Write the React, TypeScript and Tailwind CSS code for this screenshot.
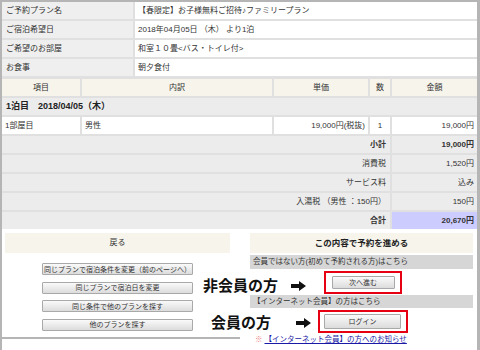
import React from "react";

const font = "font-['Liberation_Sans','Noto_Sans_CJK_JP',sans-serif]";

const Arrow = () => (
  <svg width="15" height="10" viewBox="0 0 15 10" className="shrink-0">
    <path d="M0 3H8V0L15 5L8 10V7H0Z" fill="#111" />
  </svg>
);

const InfoRow = ({ label, value }: { label: string; value: string }) => (
  <>
    <div className="h-[17px] bg-[#efefef] pl-[4px] flex items-center">{label}</div>
    <div className="h-[17px] bg-white pl-[3px] flex items-center">{value}</div>
  </>
);

const SumRow = ({
  label,
  value,
  bold = false,
  total = false,
}: {
  label: string;
  value: string;
  bold?: boolean;
  total?: boolean;
}) => (
  <>
    <div
      className={`col-span-4 h-[17px] bg-[#ececec] pr-[4px] flex items-center justify-end ${
        bold ? "font-bold" : ""
      }`}
    >
      {label}
    </div>
    <div
      className={`h-[17px] pr-[3px] flex items-center justify-end ${
        total ? "bg-[#ccccff]" : "bg-[#ececec]"
      } ${bold ? "font-bold" : ""}`}
    >
      {value}
    </div>
  </>
);

const BackButton = ({ children }: { children: React.ReactNode }) => (
  <div className="w-[151px] h-[12px] border border-[#a9a9a9] rounded-[1px] bg-gradient-to-b from-[#fafafa] to-[#dcdcdc] flex items-center justify-center text-[7px] text-[#333]">
    {children}
  </div>
);

export default function App() {
  return (
    <div
      className={`${font} relative w-[480px] h-[350px] bg-white border-l-2 border-r-[3px] border-t-2 border-[#b5b5b5] text-[8px] text-[#333] leading-none overflow-hidden`}
    >
      {/* 予約内容 + 料金明細 */}
      <div className="flex flex-col gap-[3px] bg-[#e0e0e0]">
        <div className="grid grid-cols-[131px_1fr] gap-[2px]">
          <InfoRow label="ご予約プラン名" value="【春限定】お子様無料ご招待♪ファミリープラン" />
          <InfoRow label="ご宿泊希望日" value="2018年04月05日 （木） より1泊" />
          <InfoRow label="ご希望のお部屋" value="和室１０畳<バス・トイレ付>" />
          <InfoRow label="お食事" value="朝夕食付" />
        </div>

        <div className="grid grid-cols-[78px_190px_94px_20px_1fr] gap-[2px]">
          {["項目", "内訳", "単価", "数", "金額"].map((h) => (
            <div key={h} className="h-[17px] bg-[#f6f4eb] flex items-center justify-center">
              {h}
            </div>
          ))}

          <div className="col-span-5 h-[17px] bg-[#ececec] pl-[4px] flex items-center font-bold text-[9px] text-[#222]">
            1泊目　2018/04/05（木）
          </div>

          <div className="h-[17px] bg-white pl-[3px] flex items-center">1部屋目</div>
          <div className="h-[17px] bg-white pl-[3px] flex items-center">男性</div>
          <div className="h-[17px] bg-white pr-[3px] flex items-center justify-end">19,000円(税抜)</div>
          <div className="h-[17px] bg-white flex items-center justify-center">1</div>
          <div className="h-[17px] bg-white pr-[3px] flex items-center justify-end">19,000円</div>

          <SumRow label="小計" value="19,000円" bold />
          <SumRow label="消費税" value="1,520円" />
          <SumRow label="サービス料" value="込み" />
          <SumRow label="入湯税 （男性 ：150円）" value="150円" />
          <SumRow label="合計" value="20,670円" bold total />
        </div>
      </div>

      {/* ボタン類 */}
      <div className="flex mt-[2px]">
        <div className="w-[238px] h-[108px] border-b-2 border-[#b5b5b5] pl-[3px] pt-[2px]">
          <div className="w-[225px] flex flex-col items-center">
            <div className="w-full h-[20px] bg-[#f6f4eb] flex items-center justify-center">戻る</div>
            <div className="flex flex-col gap-[6.5px] mt-[10px]">
              <BackButton>同じプランで宿泊条件を変更（前のページへ）</BackButton>
              <BackButton>同じプランで宿泊日を変更</BackButton>
              <BackButton>同じ条件で他のプランを探す</BackButton>
              <BackButton>他のプランを探す</BackButton>
            </div>
          </div>
        </div>

        <div className="w-[223px] ml-[10px] pt-[2px] flex flex-col">
          <div className="h-[20px] bg-[#f6f4eb] flex items-center justify-center font-bold text-[8.5px] text-[#222]">
            この内容で予約を進める
          </div>
          <div className="h-[14px] mt-[2px] bg-[#d6d6d6] pl-[3px] flex items-center text-[7.5px]">
            会員ではない方(初めて予約される方)はこちら
          </div>
          <div className="h-[26px] flex items-center justify-center pl-[3px]">
            <div className="w-[78px] h-[23px] border-2 border-[#e60012] flex items-center justify-center">
              <div className="w-[63px] h-[13px] border border-[#a9a9a9] rounded-[1px] bg-gradient-to-b from-[#fafafa] to-[#dcdcdc] flex items-center justify-center text-[7px]">
                次へ進む
              </div>
            </div>
          </div>
          <div className="h-[13px] bg-[#d6d6d6] pl-[3px] flex items-center text-[7.5px]">
            【インターネット会員】の方はこちら
          </div>
          <div className="h-[27px] flex items-center justify-center pl-[2px]">
            <div className="w-[90px] h-[23px] border-2 border-[#e60012] flex items-center justify-center">
              <div className="w-[77px] h-[15px] border border-[#a9a9a9] rounded-[1px] bg-gradient-to-b from-[#fafafa] to-[#dcdcdc] flex items-center justify-center text-[7px]">
                ログイン
              </div>
            </div>
          </div>
          <div className="flex items-center pl-[5px] text-[7.5px] mt-[1px]">
            <span className="text-[#f08080] mr-[2px]">※</span>
            <span className="text-[#1a1aa6] underline">【インターネット会員】の方へのお知らせ</span>
          </div>
        </div>
      </div>

      {/* 注釈 */}
      <div className="absolute left-[201px] top-[276px] flex items-center gap-[13px] text-[15px] font-bold text-[#111]">
        <span>非会員の方</span>
        <Arrow />
      </div>
      <div className="absolute left-[209px] top-[313px] flex items-center gap-[25px] text-[15px] font-bold text-[#111]">
        <span>会員の方</span>
        <Arrow />
      </div>
    </div>
  );
}
